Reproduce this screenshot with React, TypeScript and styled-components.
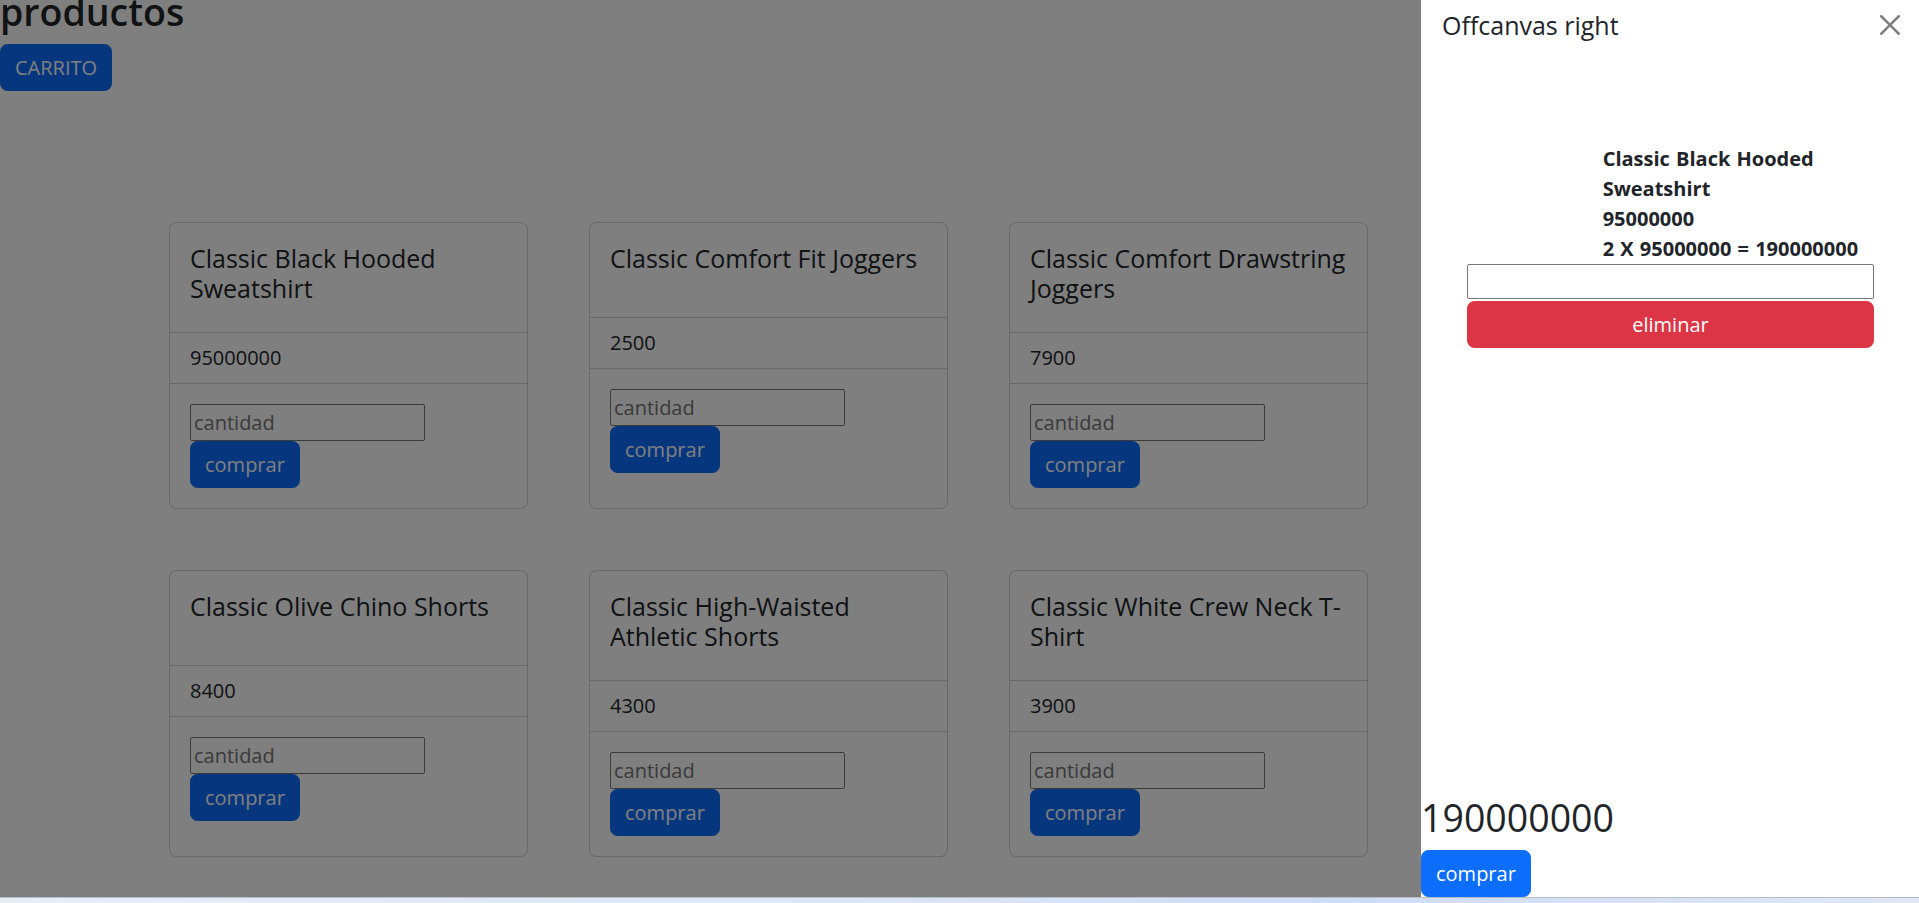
import React from "react";
import styled, { createGlobalStyle } from "styled-components";

const GlobalStyle = createGlobalStyle`
  html, body {
    margin: 0;
    padding: 0;
    height: 100%;
    overflow: hidden;
  }
  body {
    font-family: "Open Sans", "Noto Sans", "Liberation Sans", sans-serif;
    font-size: 20px;
    line-height: 1.5;
    color: #212529;
    background: #ffffff;
  }
  *, *::before, *::after { box-sizing: border-box; }
`;

type Product = { name: string; price: number };

const products: Product[] = [
  { name: "Classic Black Hooded Sweatshirt", price: 95000000 },
  { name: "Classic Comfort Fit Joggers", price: 2500 },
  { name: "Classic Comfort Drawstring Joggers", price: 7900 },
  { name: "Classic Olive Chino Shorts", price: 8400 },
  { name: "Classic High-Waisted Athletic Shorts", price: 4300 },
  { name: "Classic White Crew Neck T-Shirt", price: 3900 },
];

const Screen = styled.div`
  display: flex;
  flex-direction: column;
  height: 100vh;
`;

const Viewport = styled.div`
  position: relative;
  flex: 1;
  overflow: hidden;
  background: #ffffff;
`;

const Taskbar = styled.div`
  height: 6px;
  flex: none;
  border-top: 1px solid #b4bcc8;
  background: linear-gradient(to right, #e6eef6, #dbe5f5 45%, #cfdcf6 70%, #dfe7f4);
`;

const Page = styled.main`
  display: flex;
  flex-direction: column;
  align-items: flex-start;
`;

const PageTitle = styled.h1`
  font-size: 37.5px;
  font-weight: 600;
  line-height: 1.2;
  margin: -11px 0 10px;
`;

const Button = styled.button<{ $variant?: "primary" | "danger"; $block?: boolean }>`
  display: inline-block;
  font-family: inherit;
  font-size: 20px;
  line-height: 30px;
  padding: 7.5px 14px;
  border-radius: 7.5px;
  border: 1px solid ${(p) => (p.$variant === "danger" ? "#dc3545" : "#0d6efd")};
  background: ${(p) => (p.$variant === "danger" ? "#dc3545" : "#0d6efd")};
  color: #ffffff;
  text-align: center;
  cursor: pointer;
  width: ${(p) => (p.$block ? "100%" : "auto")};
`;

const ProductGrid = styled.section`
  display: grid;
  grid-template-columns: repeat(3, 359px);
  column-gap: 61px;
  row-gap: 61px;
  margin-top: 131px;
  padding-left: 169px;
`;

const Card = styled.article`
  display: flex;
  flex-direction: column;
  border: 1px solid rgba(0, 0, 0, 0.175);
  border-radius: 7.5px;
  background: #ffffff;
`;

const CardHeader = styled.div`
  min-height: 95px;
  padding: 20px 20px 29px;
  border-bottom: 1px solid rgba(0, 0, 0, 0.175);
`;

const CardTitle = styled.h5`
  margin: 0;
  font-size: 25px;
  font-weight: 400;
  line-height: 30px;
`;

const PriceRow = styled.div`
  padding: 10px 20px;
  line-height: 30px;
  border-bottom: 1px solid rgba(0, 0, 0, 0.175);
`;

const CardBody = styled.div`
  flex: 1;
  display: flex;
  flex-direction: column;
  align-items: flex-start;
  padding: 20px;
`;

const QtyInput = styled.input`
  width: 235px;
  height: 37px;
  border: 1px solid #767676;
  border-radius: 2px;
  padding: 1px 3px;
  font-family: inherit;
  font-size: 20px;
  color: #212529;
  background: #ffffff;
  &::placeholder { color: #757575; }
`;

const Backdrop = styled.div`
  position: absolute;
  inset: 0;
  background: rgba(0, 0, 0, 0.5);
`;

const Offcanvas = styled.aside`
  position: absolute;
  top: 0;
  right: 0;
  bottom: 0;
  width: 498px;
  display: flex;
  flex-direction: column;
  background: #ffffff;
`;

const OffcanvasHeader = styled.header`
  display: flex;
  align-items: center;
  justify-content: space-between;
  padding: 10px 19px 0 21px;
`;

const OffcanvasTitle = styled.h5`
  margin: 0;
  font-size: 25px;
  font-weight: 400;
  line-height: 30px;
`;

const CloseButton = styled.button`
  width: 20px;
  height: 20px;
  padding: 0;
  border: 0;
  background: transparent;
  opacity: 0.5;
  display: flex;
  cursor: pointer;
`;

const OffcanvasBody = styled.div`
  flex: 1;
  padding: 104px 45px 0 46px;
`;

const CartItem = styled.div`
  display: flex;
  flex-direction: column;
`;

const CartRow = styled.div`
  display: grid;
  grid-template-columns: 1fr 2fr;
`;

const CartInfo = styled.div`
  grid-column: 2;
  font-weight: 700;
  line-height: 30px;
  word-spacing: 1px;
`;

const CartInput = styled.input`
  width: 100%;
  height: 35px;
  margin-bottom: 2px;
  border: 1px solid #767676;
  border-radius: 2px;
  padding: 1px 3px;
  font-family: inherit;
  font-size: 20px;
  background: #ffffff;
`;

const OffcanvasFooter = styled.footer`
  display: flex;
  flex-direction: column;
  align-items: flex-start;
`;

const Total = styled.h3`
  margin: 0 0 10px;
  font-size: 37.5px;
  font-weight: 500;
  line-height: 1.2;
`;

const CloseIcon = () => (
  <svg width="20" height="20" viewBox="0 0 16 16" fill="#000">
    <path d="M.293.293a1 1 0 0 1 1.414 0L8 6.586 14.293.293a1 1 0 1 1 1.414 1.414L9.414 8l6.293 6.293a1 1 0 0 1-1.414 1.414L8 9.414l-6.293 6.293a1 1 0 0 1-1.414-1.414L6.586 8 .293 1.707a1 1 0 0 1 0-1.414" />
  </svg>
);

const ProductCard = ({ product }: { product: Product }) => (
  <Card>
    <CardHeader>
      <CardTitle>{product.name}</CardTitle>
    </CardHeader>
    <PriceRow>{product.price}</PriceRow>
    <CardBody>
      <QtyInput placeholder="cantidad" />
      <Button $variant="primary">comprar</Button>
    </CardBody>
  </Card>
);

export default function App() {
  const cart = { product: products[0], qty: 2 };
  const total = cart.qty * cart.product.price;
  return (
    <Screen>
      <GlobalStyle />
      <Viewport>
        <Page>
          <PageTitle>productos</PageTitle>
          <Button $variant="primary">CARRITO</Button>
          <ProductGrid>
            {products.map((p) => (
              <ProductCard key={p.name} product={p} />
            ))}
          </ProductGrid>
        </Page>
        <Backdrop />
        <Offcanvas>
          <OffcanvasHeader>
            <OffcanvasTitle>Offcanvas right</OffcanvasTitle>
            <CloseButton aria-label="Close">
              <CloseIcon />
            </CloseButton>
          </OffcanvasHeader>
          <OffcanvasBody>
            <CartItem>
              <CartRow>
                <CartInfo>
                  <div>{cart.product.name}</div>
                  <div>{cart.product.price}</div>
                  <div>
                    {cart.qty} X {cart.product.price} = {total}
                  </div>
                </CartInfo>
              </CartRow>
              <CartInput />
              <Button $variant="danger" $block>
                eliminar
              </Button>
            </CartItem>
          </OffcanvasBody>
          <OffcanvasFooter>
            <Total>{total}</Total>
            <Button $variant="primary">comprar</Button>
          </OffcanvasFooter>
        </Offcanvas>
      </Viewport>
      <Taskbar />
    </Screen>
  );
}
